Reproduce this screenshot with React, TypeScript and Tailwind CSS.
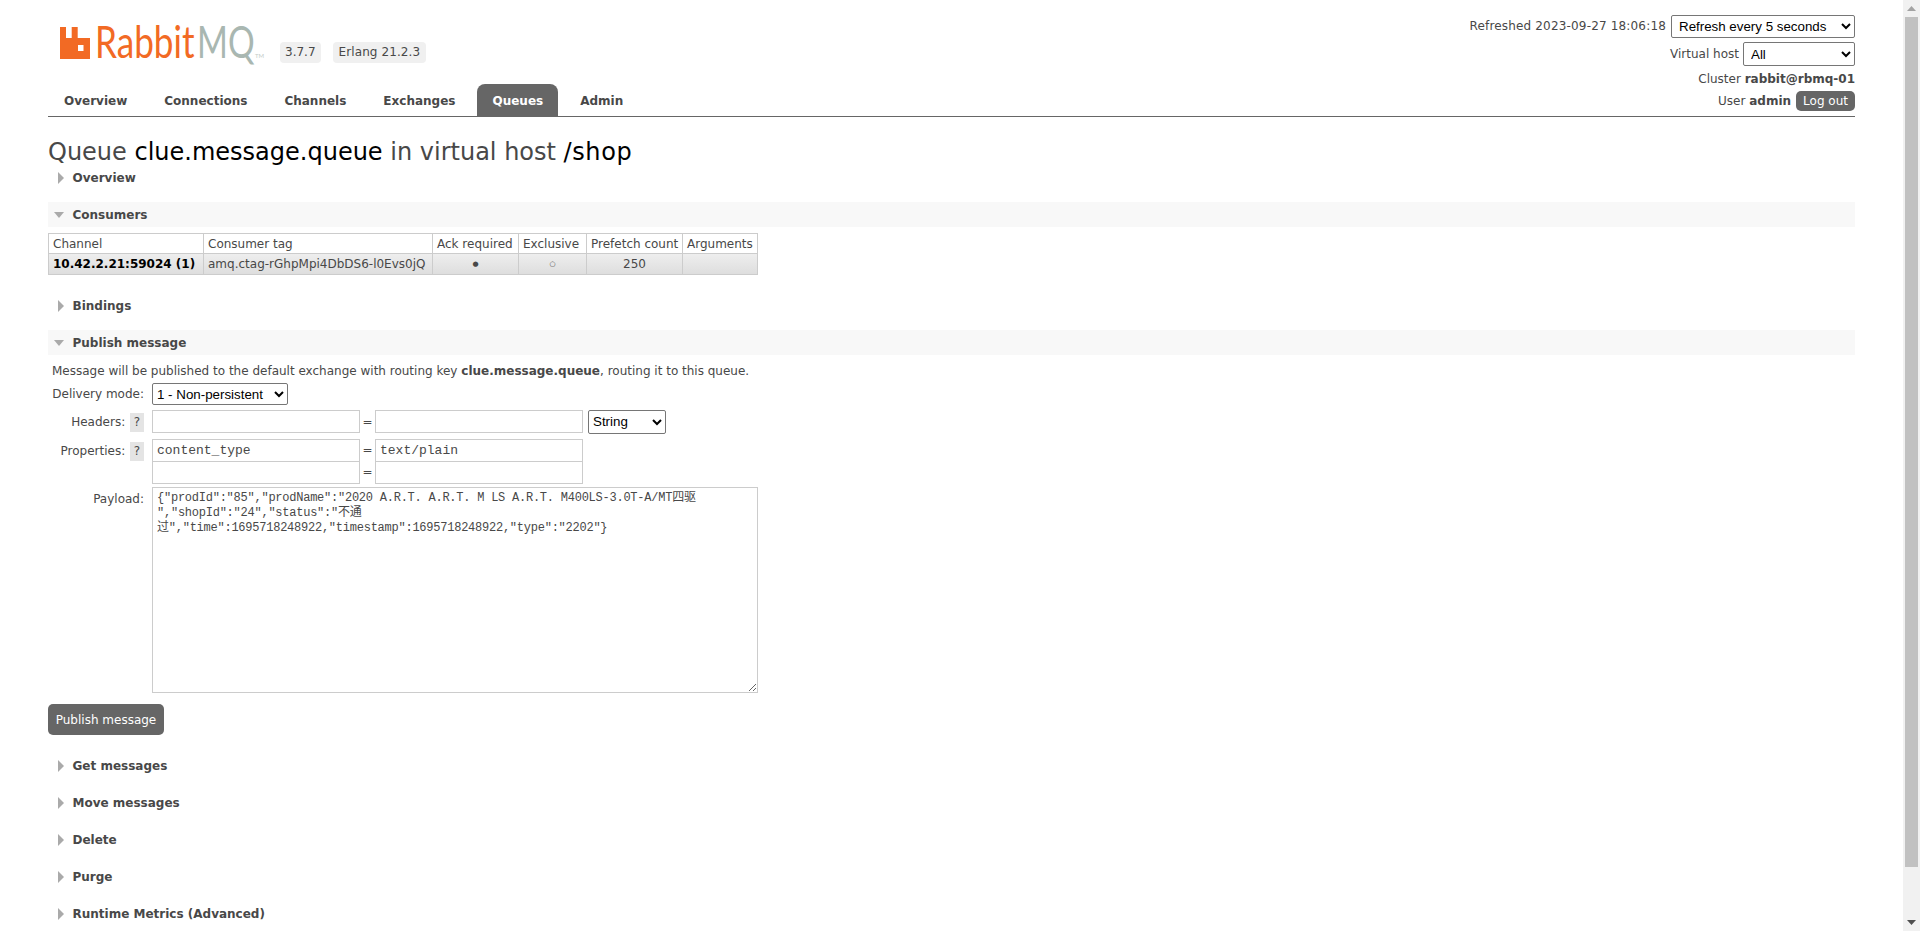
import React from "react";

const Arrow = ({ open }: { open?: boolean }) =>
  open ? (
    <svg width="10" height="6" viewBox="0 0 10 6" className="shrink-0">
      <path d="M0 0h10L5 6z" fill="#aaa" />
    </svg>
  ) : (
    <svg width="6" height="12" viewBox="0 0 6 12" className="shrink-0 ml-[4px]">
      <path d="M0 0l6 6-6 6z" fill="#aaa" />
    </svg>
  );

const Heading = ({ title, open }: { title: string; open?: boolean }) => (
  <div className={`flex items-center h-[25px] mt-[12px] pl-[6px] font-bold ${open ? "bg-[#f8f8f8]" : ""}`}>
    <span className="flex items-center w-[18.5px]">
      <Arrow open={open} />
    </span>
    <span>{title}</span>
  </div>
);

// logo: block icon plus wordmark, squeezed sideways to the reference widths
const Logo = () => (
  <svg width="206" height="58" viewBox="0 -14 206 58" className="block">
    <path
      d="M0 2h6v11h5.700V2h6v11H30v21H0zM18 20v6h5.500v-6z"
      fill="#f26a24"
      fillRule="evenodd"
    />
    <text transform="translate(35 33) scale(0.78 1)" fontFamily="Lato, sans-serif" fontSize="45" fill="#f26a24">
      Rabbit
    </text>
    <text transform="translate(137 33) scale(0.74 1)" fontFamily="Lato, sans-serif" fontSize="45" fill="#a9b7b1">
      MQ
    </text>
    <text x="195" y="33" fontFamily="Lato, sans-serif" fontSize="6" fill="#c4cbc8">
      TM
    </text>
  </svg>
);

const tabs = ["Overview", "Connections", "Channels", "Exchanges", "Queues", "Admin"];

const columns = [
  { label: "Channel", w: "w-[155px]" },
  { label: "Consumer tag", w: "w-[229px]" },
  { label: "Ack required", w: "w-[86px]" },
  { label: "Exclusive", w: "w-[68px]" },
  { label: "Prefetch count", w: "w-[96px]" },
  { label: "Arguments", w: "w-[75px]" },
];

const payload = `{"prodId":"85","prodName":"2020 A.R.T. A.R.T. M LS A.R.T. M400LS-3.0T-A/MT四驱
","shopId":"24","status":"不通
过","time":1695718248922,"timestamp":1695718248922,"type":"2202"}`;

const inputCls = "w-[208px] h-[23px] border border-[#ccc] px-[4px] text-[13px] text-[#484848] font-['Liberation_Mono',monospace] outline-none";
const selectCls = "bg-white border border-[#767676] rounded-[2px] text-[13.33px] text-black font-['Liberation_Sans',sans-serif]";

export default function App() {
  return (
    <div className="flex h-screen overflow-hidden bg-white text-[12px] text-[#484848] font-['DejaVu_Sans',Verdana,sans-serif]">
      <div className="flex-1 min-w-0 overflow-hidden px-[48px]">
        {/* header */}
        <div className="flex justify-between h-[117px] border-b border-[#666]">
          <div className="flex flex-col">
            <div className="flex items-start pt-[11px] pl-[12px] h-[84px]">
              <Logo />
              <span className="mt-[31px] ml-[14px] h-[21px] px-[5px] leading-[21px] rounded-[4px] bg-[#f0f0f0]">3.7.7</span>
              <span className="mt-[31px] ml-[12px] h-[21px] px-[6px] leading-[21px] tracking-[0.1px] rounded-[4px] bg-[#f0f0f0]">Erlang 21.2.3</span>
            </div>
            <div className="flex gap-[7px] ml-[1px] h-[32px] font-bold">
              {tabs.map((t) => (
                <div
                  key={t}
                  className={`flex items-center pt-[2px] px-[15px] rounded-t-[8px] ${t === "Queues" ? "bg-[#666] text-white" : ""}`}
                >
                  {t}
                </div>
              ))}
            </div>
          </div>
          <div className="flex flex-col items-end pt-[14px]">
            <div className="flex items-center h-[24px] gap-[5px]">
              <span className="tracking-[0.17px]">Refreshed 2023-09-27 18:06:18</span>
              <select className={`w-[184px] h-[23px] pl-[3px] ${selectCls}`}>
                <option>Refresh every 5 seconds</option>
              </select>
            </div>
            <div className="flex items-center h-[24px] mt-[4px] gap-[4px]">
              <span>Virtual host</span>
              <select className={`w-[112px] h-[24px] pl-[3px] ${selectCls}`}>
                <option>All</option>
              </select>
            </div>
            <div className="h-[24px] mt-[1px] leading-[24px]">
              Cluster <b>rabbit@rbmq-01</b>
            </div>
            <div className="flex items-center h-[20px] gap-[5px]">
              <span>
                User <b>admin</b>
              </span>
              <span className="h-[20px] px-[7px] leading-[20px] rounded-[5px] bg-[#666] text-white">Log out</span>
            </div>
          </div>
        </div>

        {/* title */}
        <h1 className="mt-[21px] h-[27px] text-[24px] leading-[28px] font-normal whitespace-nowrap">
          Queue <b className="font-normal text-black">clue.message.queue</b> in virtual host <b className="font-normal text-black tracking-[0.6px]">/shop</b>
        </h1>

        <div className="-mt-[12px]">
          <Heading title="Overview" />
          <Heading title="Consumers" open />
        </div>

        {/* consumers table */}
        <table className="mt-[6px] w-[709px] border-collapse border border-[#ccc] table-fixed">
          <thead>
            <tr className="h-[20px] bg-white">
              {columns.map((c) => (
                <th key={c.label} className={`${c.w} border border-[#ccc] px-[4px] font-normal text-left whitespace-nowrap`}>
                  {c.label}
                </th>
              ))}
            </tr>
          </thead>
          <tbody>
            <tr className="h-[21px] bg-gradient-to-b from-[#eeeeee] to-[#dddddd]">
              <td className="border border-[#ccc] px-[4px] font-bold text-black whitespace-nowrap">10.42.2.21:59024 (1)</td>
              <td className="border border-[#ccc] px-[4px] whitespace-nowrap">amq.ctag-rGhpMpi4DbDS6-l0Evs0jQ</td>
              <td className="border border-[#ccc] text-center text-[7px]">●</td>
              <td className="border border-[#ccc] text-center text-[7px]">○</td>
              <td className="border border-[#ccc] text-center">250</td>
              <td className="border border-[#ccc]"></td>
            </tr>
          </tbody>
        </table>

        <div className="mt-[18px]">
          <Heading title="Bindings" />
          <Heading title="Publish message" open />
        </div>

        {/* publish form */}
        <p className="mt-[9px] ml-[4px] leading-[15px]">
          Message will be published to the default exchange with routing key <b>clue.message.queue</b>, routing it to this queue.
        </p>
        <div className="flex items-center mt-[4px] h-[22px]">
          <label className="w-[96px] text-right">Delivery mode:</label>
          <select className={`ml-[8px] w-[136px] h-[22px] ${selectCls}`}>
            <option>1 - Non-persistent</option>
          </select>
        </div>
        <div className="flex items-center mt-[5px] h-[23px]">
          <label className="w-[96px] pt-[2px] text-right">
            Headers: <span className="inline-block w-[14px] h-[19px] ml-[1px] bg-[#e4e4e4] text-center leading-[19px]">?</span>
          </label>
          <input className={`ml-[8px] ${inputCls}`} />
          <span className="w-[15px] text-center">=</span>
          <input className={inputCls} />
          <select className={`ml-[5px] w-[78px] h-[24px] ${selectCls}`}>
            <option>String</option>
          </select>
        </div>
        <div className="flex items-center mt-[6px] h-[22px]">
          <label className="w-[96px] pt-[2px] text-right">
            Properties: <span className="inline-block w-[14px] h-[19px] ml-[1px] bg-[#e4e4e4] text-center leading-[19px]">?</span>
          </label>
          <input className={`ml-[8px] ${inputCls}`} defaultValue="content_type" />
          <span className="w-[15px] text-center">=</span>
          <input className={inputCls} defaultValue="text/plain" />
        </div>
        <div className="flex items-center h-[22px]">
          <span className="w-[96px]" />
          <input className={`ml-[8px] ${inputCls}`} />
          <span className="w-[15px] text-center">=</span>
          <input className={inputCls} />
        </div>
        <div className="flex items-start mt-[4px]">
          <label className="w-[96px] text-right mt-[5px] leading-[15px]">Payload:</label>
          <textarea
            className="block ml-[8px] w-[606px] h-[206px] border border-[#ccc] px-[4px] py-[3px] text-[12px] leading-[15px] tracking-[-0.24px] text-[#484848] whitespace-pre font-['Liberation_Mono','Noto_Sans_CJK_SC',monospace] outline-none"
            defaultValue={payload}
          />
        </div>
        <button className="block mt-[11px] w-[116px] h-[31px] rounded-[5px] bg-[#666] text-white text-[12px] font-['DejaVu_Sans',sans-serif]">
          Publish message
        </button>

        <div className="mt-[18px]">
          {["Get messages", "Move messages", "Delete", "Purge", "Runtime Metrics (Advanced)"].map((t) => (
            <Heading key={t} title={t} />
          ))}
        </div>
      </div>

      {/* browser scrollbar */}
      <div className="flex flex-col w-[17px] shrink-0 bg-[#f1f1f1]">
        <div className="flex items-center justify-center h-[17px]">
          <svg width="9" height="5" viewBox="0 0 9 5"><path d="M4.500 0L9 5H0z" fill="#a3a3a3" /></svg>
        </div>
        <div className="mx-[2px] h-[850px] bg-[#c1c1c1]" />
        <div className="flex-1" />
        <div className="flex items-center justify-center h-[17px]">
          <svg width="9" height="5" viewBox="0 0 9 5"><path d="M0 0h9L4.500 5z" fill="#505050" /></svg>
        </div>
      </div>
    </div>
  );
}
